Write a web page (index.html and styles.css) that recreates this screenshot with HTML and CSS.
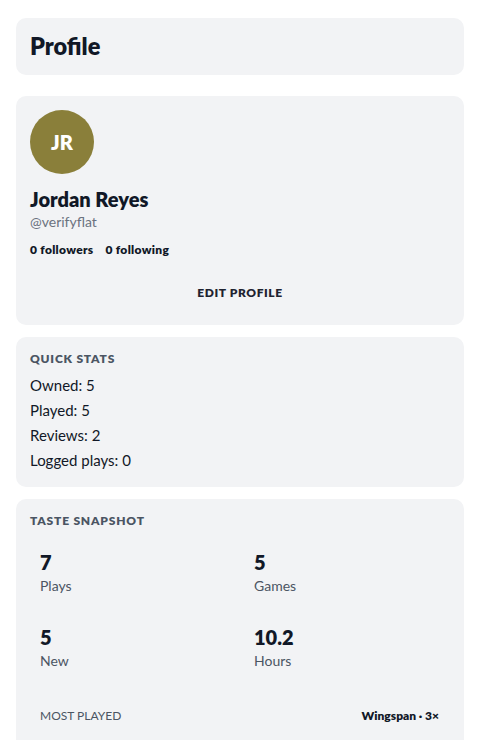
FILE: index.html
```html
<!DOCTYPE html>
<html lang="en">
<head>
    <meta charset="UTF-8">
    <meta name="viewport" content="width=device-width, initial-scale=1.0">
    <title>Profile</title>
    <link rel="stylesheet" href="styles.css">
</head>
<body>
    <div class="page">
        <div class="card header">
            <h1>Profile</h1>
        </div>

        <div class="card profile">
            <div class="avatar">JR</div>
            <h2 class="name">Jordan Reyes</h2>
            <div class="handle">@verifyflat</div>
            <div class="follows">
                <span>0 followers</span>
                <span>0 following</span>
            </div>
            <button class="edit-btn">EDIT PROFILE</button>
        </div>

        <div class="card">
            <div class="section-title">QUICK STATS</div>
            <ul class="stat-list">
                <li>Owned: 5</li>
                <li>Played: 5</li>
                <li>Reviews: 2</li>
                <li>Logged plays: 0</li>
            </ul>
        </div>

        <div class="card taste">
            <div class="section-title">TASTE SNAPSHOT</div>
            <div class="taste-grid">
                <div class="taste-item">
                    <div class="taste-value">7</div>
                    <div class="taste-label">Plays</div>
                </div>
                <div class="taste-item">
                    <div class="taste-value">5</div>
                    <div class="taste-label">Games</div>
                </div>
                <div class="taste-item">
                    <div class="taste-value">5</div>
                    <div class="taste-label">New</div>
                </div>
                <div class="taste-item">
                    <div class="taste-value">10.2</div>
                    <div class="taste-label">Hours</div>
                </div>
            </div>
            <div class="most-played">
                <span class="mp-label">MOST PLAYED</span>
                <span class="mp-value">Wingspan · 3×</span>
            </div>
        </div>
    </div>
</body>
</html>
```

FILE: styles.css
```css
body {
    font-family: 'Lato', 'Noto Sans', sans-serif;
    background-color: #ffffff;
    color: #111827;
    margin: 0;
    padding: 18px 16px;
}
.page {
    display: flex;
    flex-direction: column;
    gap: 12px;
}
.card {
    background: #f2f3f5;
    border-radius: 10px;
    padding: 14px;
}
.header {
    margin-bottom: 9px;
}
h1 {
    margin: 0;
    font-size: 23.5px;
    line-height: 29px;
    font-weight: 800;
    color: #111827;
}
.avatar {
    width: 64px;
    height: 64px;
    border-radius: 50%;
    background: #8a7f3a;
    color: #ffffff;
    display: flex;
    align-items: center;
    justify-content: center;
    font-size: 20px;
    font-weight: 800;
}
.name {
    margin: 13px 0 0;
    font-size: 20px;
    line-height: 24px;
    font-weight: 800;
}
.handle {
    margin-top: 2px;
    font-size: 14px;
    line-height: 18px;
    color: #6b7280;
}
.follows {
    margin-top: 11px;
    display: flex;
    gap: 12px;
    font-size: 12px;
    line-height: 16px;
    font-weight: 800;
    letter-spacing: 0.3px;
}
.edit-btn {
    display: block;
    width: 100%;
    margin-top: 16px;
    padding: 10px;
    border: none;
    background: transparent;
    font-family: inherit;
    font-size: 12px;
    line-height: 17px;
    font-weight: 800;
    letter-spacing: 0.6px;
    color: #1f2330;
    cursor: pointer;
}
.section-title {
    font-size: 12px;
    line-height: 16px;
    font-weight: 800;
    letter-spacing: 0.8px;
    color: #4b5563;
}
.stat-list {
    list-style: none;
    margin: 6px 0 0;
    padding: 0;
    font-size: 15px;
    line-height: 25px;
    color: #111827;
}
.taste-grid {
    display: grid;
    grid-template-columns: 1fr 1fr;
    column-gap: 8px;
    row-gap: 8px;
    margin-top: 10px;
}
.taste-item {
    padding: 10px;
}
.taste-value {
    font-size: 20px;
    line-height: 27px;
    font-weight: 800;
}
.taste-label {
    font-size: 14px;
    line-height: 20px;
    color: #4b5563;
}
.most-played {
    display: flex;
    justify-content: space-between;
    align-items: center;
    margin-top: 27px;
    padding: 0 11px 14px 10px;
}
.mp-label {
    font-size: 12px;
    line-height: 16px;
    color: #4b5563;
}
.mp-value {
    font-size: 12px;
    line-height: 16px;
    font-weight: 800;
}
```
